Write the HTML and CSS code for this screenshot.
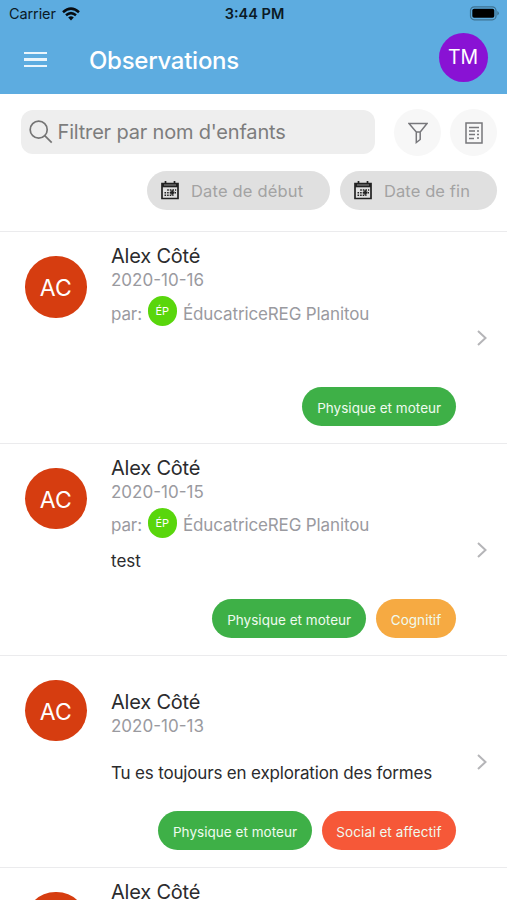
FILE: index.html
```html
<!DOCTYPE html>
<html lang="fr">
<head>
<meta charset="utf-8">
<title>Observations</title>
<link rel="stylesheet" href="styles.css">
</head>
<body>
<svg class="defs" width="0" height="0">
  <symbol id="chevron" viewBox="0 0 12 18"><path d="M2 2l7.5 7L2 16" fill="none" stroke="#b5b5b8" stroke-width="2"/></symbol>
  <symbol id="calendar" viewBox="0 0 18 19">
    <path d="M1 2.500h16v15H1z" fill="none" stroke="#222" stroke-width="1.700"/>
    <path d="M1 2.500h16v3.800H1z" fill="#222"/>
    <path d="M4.500 0v4M13.500 0v4" stroke="#222" stroke-width="1.700"/>
    <path d="M3 4h12" stroke="#999" stroke-width=".9"/>
    <path d="M6.200 9h9M3.500 11.700h11.500M3.500 14.300h9" stroke="#222" stroke-width="1.500" stroke-dasharray="1.600 1"/>
    <path d="M9 11.500h4.500M11.300 9.300v4.500" stroke="#222" stroke-width="2"/>
  </symbol>
</svg>
<header class="header">
  <div class="status">
    <div class="carrier"><span>Carrier</span>
      <svg width="18" height="14" viewBox="0 0 18 14" fill="none" stroke="#080c10" stroke-width="2.500"><path d="M1 5.200Q9-2 17 5.200M4 8.300Q9 4 14 8.300"/><path d="M6.200 10.500Q9 8.200 11.800 10.500L9 13.500z" fill="#080c10" stroke="none"/></svg>
    </div>
    <span class="time">3:44 PM</span>
    <svg class="battery" width="31" height="15" viewBox="0 0 31 15"><rect x="1.500" y=".8" width="25.500" height="13" rx="3.800" fill="none" stroke="#3e7291" stroke-width="1.200"/><rect x="3.300" y="2.800" width="22" height="9" rx="1.800" fill="#000"/><path d="M28.300 5v4.600q1.600-.8 1.600-2.300T28.300 5z" fill="#3e7291"/></svg>
  </div>
  <div class="nav">
    <div class="menu"><i></i><i></i><i></i></div>
    <h1 class="title">Observations</h1>
    <div class="avatar user">TM</div>
  </div>
</header>
<section class="filters">
  <div class="search-row">
    <div class="search">
      <svg width="24" height="24" viewBox="0 0 24 24" fill="none" stroke="#757575" stroke-width="1.700"><circle cx="9.700" cy="9.700" r="8.500"/><path d="M15.700 15.700l7 7"/></svg>
      <span>Filtrer par nom d'enfants</span>
    </div>
    <div class="round">
      <svg width="20" height="22" viewBox="0 0 20 22" fill="none" stroke="#77777b" stroke-width="1.500"><path d="M1 1.500h18L12.200 10v7.500L8.300 20.500V10zM8.300 10h3.900"/></svg>
    </div>
    <div class="round">
      <svg width="18" height="22" viewBox="0 0 18 22" fill="none" stroke="#77777b" stroke-width="1.500"><path d="M1 1h16v20H1z"/><path d="M4 5.500h10M4 9h6M12 9h2M4 12.500h6M12 12.500h2M4 16.500h5M12 16h2"/></svg>
    </div>
  </div>
  <div class="date-row">
    <div class="date start"><svg width="18" height="19"><use href="#calendar"/></svg><span>Date de début</span></div>
    <div class="date end"><svg width="18" height="19"><use href="#calendar"/></svg><span>Date de fin</span></div>
  </div>
</section>
<main class="list">
  <article class="row">
    <div class="avatar child">AC</div>
    <div class="info">
      <h2 class="name">Alex Côté</h2>
      <div class="day">2020-10-16</div>
      <div class="author"><span class="by">par:</span><span class="avatar mini">ÉP</span><span class="who">ÉducatriceREG Planitou</span></div>
      <div class="tags"><span class="tag green">Physique et moteur</span></div>
    </div>
    <svg class="chevron" width="12" height="18"><use href="#chevron"/></svg>
  </article>
  <article class="row">
    <div class="avatar child">AC</div>
    <div class="info">
      <h2 class="name">Alex Côté</h2>
      <div class="day">2020-10-15</div>
      <div class="author"><span class="by">par:</span><span class="avatar mini">ÉP</span><span class="who">ÉducatriceREG Planitou</span></div>
      <p class="note short">test</p>
      <div class="tags"><span class="tag green">Physique et moteur</span><span class="tag orange">Cognitif</span></div>
    </div>
    <svg class="chevron" width="12" height="18"><use href="#chevron"/></svg>
  </article>
  <article class="row">
    <div class="avatar child">AC</div>
    <div class="info anonymous">
      <h2 class="name">Alex Côté</h2>
      <div class="day">2020-10-13</div>
      <p class="note">Tu es toujours en exploration des formes</p>
      <div class="tags"><span class="tag green">Physique et moteur</span><span class="tag red">Social et affectif</span></div>
    </div>
    <svg class="chevron" width="12" height="18"><use href="#chevron"/></svg>
  </article>
  <article class="row">
    <div class="avatar child">AC</div>
    <div class="info"><h2 class="name">Alex Côté</h2></div>
  </article>
</main>
</body>
</html>
```
FILE: styles.css
```css
* { box-sizing: border-box; }
body {
  margin: 0;
  height: 900px;
  overflow: hidden;
  background: #fff;
  font-family: Inter, "Liberation Sans", sans-serif;
  white-space: nowrap;
}
h1, h2, p { margin: 0; font-weight: 400; }
svg { display: block; flex: none; }
.defs { position: absolute; }
.avatar {
  display: flex;
  align-items: center;
  justify-content: center;
  flex: none;
  border-radius: 50%;
  color: #fff;
}
.header { height: 93.5px; background: #5dace0; }
.status {
  display: grid;
  grid-template-columns: 1fr auto 1fr;
  align-items: center;
  height: 27px;
  padding: 0 7px 0 9px;
  color: #0b1a26;
  font-size: 14.5px;
}
.carrier { display: flex; align-items: center; gap: 6px; letter-spacing: -.1px; }
.time { font-size: 14.5px; font-weight: 600; }
.battery { justify-self: end; }
.nav { display: flex; align-items: center; height: 60px; padding: 0 19.500px 0 24px; }
.menu { display: flex; flex-direction: column; gap: 4px; width: 23px; margin-top: 5px; }
.menu i { height: 2.5px; background: #eaf5fc; }
.title {
  margin: 7px auto 0 42px;
  color: #fff;
  font-size: 24px;
  font-weight: 500;
  line-height: 30px;
  letter-spacing: -.28px;
}
.user { width: 49px; height: 49px; background: #8912d4; font-size: 19.5px; }
.filters { height: 138.2px; padding: 15px 10px 0 20px; border-bottom: 1px solid #ebebed; }
.search-row { display: flex; align-items: center; }
.search {
  display: flex;
  align-items: center;
  gap: 5px;
  width: 354.5px;
  height: 44px;
  margin: 0 19px 0 .5px;
  padding: 0 0 1px 8px;
  border-radius: 12px;
  background: #eee;
  color: #7d7d7d;
  font-size: 20px;
  letter-spacing: -.18px;
}
.round {
  display: flex;
  align-items: center;
  justify-content: center;
  width: 47px;
  height: 47px;
  border-radius: 50%;
  background: #f7f7f7;
}
.round svg { margin-top: 1px; }
.round + .round { margin-left: 9px; }
.date-row { display: flex; justify-content: flex-end; gap: 10px; margin-top: 15px; }
.date {
  display: flex;
  align-items: center;
  gap: 12.5px;
  height: 39px;
  padding-left: 13.5px;
  border-radius: 20px;
  background: #e0e0e0;
  color: #a3a3a3;
  font-size: 16.5px;
  letter-spacing: .18px;
}
.start { width: 183px; }
.end { width: 157px; letter-spacing: .1px; }
.date span { padding-top: 1px; }
.list { padding-top: .5px; }
.row {
  display: flex;
  height: 211.8px;
  padding: 0 18px 0 25px;
  border-bottom: 1px solid #ebebed;
}
.child { width: 61.5px; height: 61.5px; margin-top: 24px; background: #d63d10; font-size: 23px; padding-top: 2px; }
.info { display: flex; flex-direction: column; width: 345px; margin-left: 24.5px; padding: 12px 0 16.8px; }
.anonymous { padding-top: 34.5px; }
.name { color: #2b2b2d; font-size: 20px; line-height: 25px; letter-spacing: -.2px; }
.day { color: #9a9a9f; font-size: 17px; line-height: 22px; }
.author { display: flex; align-items: center; height: 40px; color: #9a9a9f; font-size: 17px; letter-spacing: -.13px; }
.by { width: 36.5px; padding-top: 5px; }
.mini { width: 29.5px; height: 29.5px; background: #59d60c; font-size: 11px; }
.who { margin-left: 6px; padding-top: 5px; }
.note { margin-top: 25px; color: #2b2b2d; font-size: 17px; line-height: 22px; letter-spacing: -.17px; }
.short { margin-top: 7.500px; letter-spacing: 0; }
.tags { display: flex; justify-content: flex-end; gap: 10px; margin-top: auto; }
.tag {
  height: 39px;
  padding: 2px 14.8px 0;
  border-radius: 20px;
  color: #effbef;
  font-size: 13.5px;
  line-height: 38px;
  letter-spacing: .03px;
}
.green { background: #3eb047; }
.orange { background: #f6aa42; }
.red { background: #f65838; padding: 2px 14.5px 0; letter-spacing: .1px; }
.chevron { margin: 97px 0 0 20px; }
```
